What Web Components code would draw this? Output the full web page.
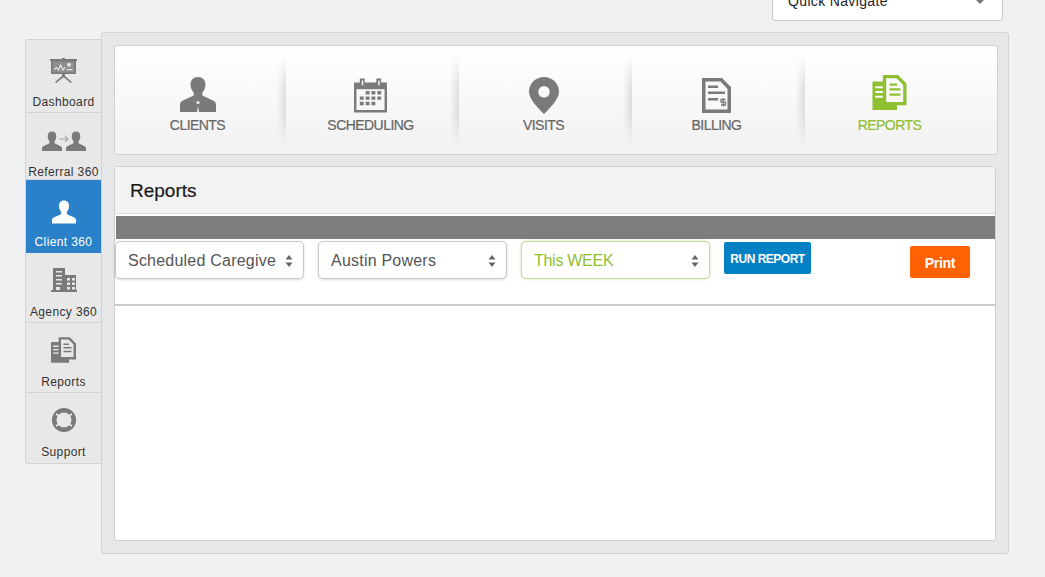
<!DOCTYPE html>
<html>
<head>
<meta charset="utf-8">
<title>Reports</title>
<style>
  html, body { margin: 0; height: 100%; background: #f0f1f3; overflow: hidden; }
  body { font-family: "Liberation Sans", Arial, sans-serif; }
</style>
</head>
<body>
<app-shell>
  <pick-box slot="top" wide>Quick Navigate</pick-box>

  <side-nav slot="side">
    <side-item label="Dashboard" h="73" top="15">
      <svg width="27" height="25" viewBox="0 0 27 25" fill="#7a7a7a">
        <path d="M12 0h3v1h12v2h-1v13H15v2l7 6-1.200 1L14 19.500h-1L6.200 25 5 24l7-6v-2H1V3H0V1h12z"/>
        <path fill="#8e8e8e" d="M2.500 3.500h22v11h-22z"/>
        <path fill="none" stroke="#e4e4e4" stroke-width="1.200" d="M4 11.500l2.500-2 2 2.500 2-5 2.500 5 2-3"/>
        <circle cx="19" cy="6.800" r="2" fill="#e4e4e4"/>
        <path fill="#e4e4e4" d="M16.500 11h6v1.200h-6z"/>
      </svg>
    </side-item>
    <side-item label="Referral 360" h="67" top="13" low>
      <svg width="44" height="24" viewBox="0 0 44 24" fill="#7a7a7a">
        <path fill="none" stroke="#a8a8a8" stroke-width="1.100" d="M17 10h9M23 7l3 3-3 3"/>
        <path d="M10 2.500c2.900 0 4.300 2 4.300 4.700 0 2.200-.8 4-1.800 5v2l5.800 2.700c1.100.5 1.700 1.200 1.700 2.300V22H0v-2.800c0-1.100.6-1.800 1.700-2.300l5.800-2.700v-2c-1-1-1.800-2.800-1.800-5C5.700 4.500 7.100 2.500 10 2.500z"/>
        <path d="M34 2.500c2.900 0 4.300 2 4.300 4.700 0 2.200-.8 4-1.800 5v2l5.800 2.700c1.100.5 1.700 1.200 1.700 2.300V22H24v-2.800c0-1.100.6-1.800 1.700-2.300l5.800-2.700v-2c-1-1-1.800-2.800-1.800-5C29.700 4.500 31.100 2.500 34 2.500z"/>
      </svg>
    </side-item>
    <side-item label="Client 360" h="73" top="17" active>
      <svg width="26" height="26" viewBox="0 0 26 26" fill="#fff">
        <path d="M13 1.500c3.300 0 5 2.300 5 5.400 0 2.500-.9 4.500-2.100 5.800v2.600l6.900 3c1.400.6 2.200 1.500 2.200 3v3.200H1v-3.200c0-1.500.8-2.400 2.200-3l6.900-3v-2.600C8.900 11.400 8 9.400 8 6.900c0-3.100 1.700-5.400 5-5.400z"/>
      </svg>
    </side-item>
    <side-item label="Agency 360" h="70" top="12">
      <svg width="26" height="26" viewBox="0 0 26 26" fill="#7a7a7a">
        <path fill-rule="evenodd" d="M2 1h12v7h11v15h1v2H0v-2h2zM5 4v1.500h6V4zm0 4v1.500h6V8zm0 4v1.500h6V12zm0 4v1.500h6V16zm0 4v3h4v-3zm11-9v2.500h3V11zm5 0v2.500h3V11zm-5 4.500V18h3v-2.500zm5 0V18h3v-2.500zM16 20v2.500h3V20zm5 0v2.500h3V20z"/>
      </svg>
    </side-item>
    <side-item label="Reports" h="70" top="12">
      <svg width="25" height="26" viewBox="0 0 36 37" fill="#7a7a7a">
        <path fill-rule="evenodd" d="M11 0h16l9 9v23H26v5H0V7h11zM14.500 3.500v25h18V10.500l-7-7zM3 12v2h8v-2zm0 5v2h8v-2zm0 5v2h8v-2z"/>
        <path d="M18 9h8v2.400h-8zM18 14h11.500v2.400H18zM18 19.500h11.500v2.400H18z"/>
      </svg>
    </side-item>
    <side-item label="Support" h="70" top="12" last>
      <svg width="26" height="26" viewBox="0 0 26 26">
        <circle cx="13" cy="13" r="9.800" fill="none" stroke="#7a7a7a" stroke-width="4.600"/>
        <path stroke="#e8e8e8" stroke-width="1.500" d="M5 7l5 3M21 7l-5 3M5 19l5-3M21 19l-5-3"/>
      </svg>
    </side-item>
  </side-nav>

  <top-tabs>
    <tab-item label="CLIENTS" first>
      <svg width="36" height="36" viewBox="0 0 36 36" fill="#7a7a7a">
        <path d="M18 0c4.500 0 7.500 3 7.500 7.500 0 3.500-1.400 6-3.200 8v3l10.700 5c2 .9 3 2.300 3 4.500v7H19l-1-6-1 6H0v-7c0-2.200 1-3.600 3-4.500l10.700-5v-3c-1.800-2-3.200-4.500-3.200-8C10.500 3 13.500 0 18 0z"/>
        <circle cx="18" cy="25.500" r="1.500" fill="#f6f6f6"/>
      </svg>
    </tab-item>
    <tab-item label="SCHEDULING">
      <svg width="33" height="36" viewBox="0 0 34 36" fill="#7a7a7a">
        <path fill-rule="evenodd" d="M0 5h6V1h5v4h12V1h5v4h6v31H0zM8 3v5h1.500V3zm17 0v5h1.500V3zM2.500 12v21.500h29V12z"/>
        <path d="M12 14h4v3.500h-4zM18 14h4v3.500h-4zM24 14h4v3.500h-4zM6 19.500h4V23H6zM12 19.500h4V23h-4zM18 19.500h4V23h-4zM24 19.500h4V23h-4zM6 25h4v3.500H6zM12 25h4v3.500h-4zM18 25h4v3.500h-4z"/>
      </svg>
    </tab-item>
    <tab-item label="VISITS">
      <svg width="30" height="37" viewBox="0 0 30 37" fill="#7a7a7a">
        <path fill-rule="evenodd" d="M15 0c8.300 0 15 6.500 15 14.700 0 7.500-9 16.300-15 22.300C9 31 0 22.200 0 14.700 0 6.500 6.700 0 15 0zm0 9a5.800 5.800 0 1 0 0 11.600A5.800 5.800 0 0 0 15 9z"/>
      </svg>
    </tab-item>
    <tab-item label="BILLING">
      <svg width="29" height="35" viewBox="0 0 29 35" fill="#7a7a7a">
        <path fill-rule="evenodd" d="M0 0h20l9 9v26H0zM3.500 3.500v28h22V11L18.500 3.500z"/>
        <path d="M6 7.500h10V10H6zM6 13.500h17V16H6zM6 20h10v2.500H6z"/>
        <path fill="none" stroke="#7a7a7a" stroke-width="1.300" d="M23.500 21.500H19v2.700h4.500V27H19M21.200 20v8.500"/>
      </svg>
    </tab-item>
    <tab-item label="REPORTS" active>
      <svg width="35" height="35" viewBox="0 0 36 37" fill="#8fc031" style="margin-bottom:5px">
        <path fill-rule="evenodd" d="M11 0h16l9 9v23H26v5H0V7h11zM14.500 3.500v25h18V10.500l-7-7zM3 12v2h8v-2zm0 5v2h8v-2zm0 5v2h8v-2z"/>
        <path d="M18 9h8v2.400h-8zM18 14h11.500v2.400H18zM18 19.500h11.500v2.400H18z"/>
      </svg>
    </tab-item>
  </top-tabs>

  <report-panel heading="Reports">
    <pick-box>Scheduled Caregive</pick-box>
    <pick-box>Austin Powers</pick-box>
    <pick-box green>This WEEK</pick-box>
    <action-button color="#0480c5" offset="1" w="87" h="32" fs="12" ls="-.5">RUN REPORT</action-button>
    <action-button slot="end" color="#ff6205" offset="5" w="60" h="32" fs="14" ls="-.3">Print</action-button>
  </report-panel>
</app-shell>

<script>
// small helper so each class only has to give its markup once
const shadow = (el, html) => {
  const root = el.attachShadow({ mode: 'open' });
  root.innerHTML = html;
  return root;
};

const FONT = '"Liberation Sans", Arial, sans-serif';

customElements.define('app-shell', class extends HTMLElement {
  constructor() {
    super();
    shadow(this, `
      <style>
        :host { display: block; width: 1045px; height: 577px; overflow: hidden; }
        .top { height: 21px; overflow: hidden; display: flex; justify-content: flex-end; align-items: flex-end; padding-right: 42px; }
        .body { display: flex; align-items: flex-start; padding: 11px 0 0 25px; }
        .side { padding-top: 7px; flex: none; width: 76px; }
        .main {
          flex: none; box-sizing: border-box; width: 908px; height: 522px;
          background: #e6e7e9; border: 1px solid #d2d3d5; border-radius: 3px;
          padding: 12px 10px 12px 12px;
          display: flex; flex-direction: column; gap: 11px;
        }
      </style>
      <div class="top"><slot name="top"></slot></div>
      <div class="body">
        <div class="side"><slot name="side"></slot></div>
        <div class="main"><slot></slot></div>
      </div>`);
  }
});

customElements.define('side-nav', class extends HTMLElement {
  constructor() {
    super();
    shadow(this, `
      <style>
        :host {
          display: block; box-sizing: border-box; width: 76px;
          background: #e8e8e8; border: 1px solid #d4d4d4; border-right: 0;
          border-radius: 3px 0 0 3px;
        }
      </style>
      <slot></slot>`);
  }
});

customElements.define('side-item', class extends HTMLElement {
  constructor() {
    super();
    const label = this.getAttribute('label');
    const h = this.getAttribute('h');
    const top = this.getAttribute('top') || 16;
    shadow(this, `
      <style>
        :host {
          display: flex; flex-direction: column; align-items: center; box-sizing: border-box;
          height: ${h}px; padding-top: ${top}px;
          border-bottom: 1px solid #d4d4d4; color: #333;
          font: 12px/14px ${FONT}; letter-spacing: .38px;
        }
        :host([active]) { background: #2a81c9; color: #fff; border-bottom-color: #2a81c9; }
        :host([last]) { border-bottom: 0; }
        .i { height: 30px; display: flex; align-items: center; justify-content: center; }
        .t { margin-top: auto; padding-bottom: 3px; white-space: nowrap; }
        :host([low]) .t { padding-bottom: 0; }
        :host([last]) .t { padding-bottom: 4px; }
      </style>
      <div class="i"><slot></slot></div>
      <div class="t">${label}</div>`);
  }
});

customElements.define('top-tabs', class extends HTMLElement {
  constructor() {
    super();
    shadow(this, `
      <style>
        :host {
          display: flex; box-sizing: border-box; width: 884px; height: 110px; flex: none;
          background: linear-gradient(#fff, #f1f1f1);
          border: 1px solid #d0d0d0; border-radius: 3px;
        }
      </style>
      <slot></slot>`);
  }
});

customElements.define('tab-item', class extends HTMLElement {
  constructor() {
    super();
    shadow(this, `
      <style>
        :host {
          position: relative; flex: none; box-sizing: border-box; width: 173px; padding: 30px 4px 0 0;
          display: flex; flex-direction: column; align-items: center;
          color: #666; font: 14px/16px ${FONT}; letter-spacing: -.55px;
          -webkit-text-stroke: .2px currentColor;
        }
        :host([first]) { margin-left: -2px; }
        :host([active]) { color: #8fc031; }
        :host(:not([first]))::before {
          content: ""; position: absolute; left: -9px; top: 8px; bottom: 8px; width: 9px;
          background: linear-gradient(to right, rgba(0,0,0,0), rgba(0,0,0,.11));
          -webkit-mask-image: linear-gradient(transparent, #000 35%, #000 65%, transparent);
        }
        .i { height: 38px; display: flex; align-items: center; justify-content: center; }
        .t { margin-top: 3px; white-space: nowrap; }
      </style>
      <div class="i"><slot></slot></div>
      <div class="t">${this.getAttribute('label')}</div>`);
  }
});

customElements.define('report-panel', class extends HTMLElement {
  constructor() {
    super();
    shadow(this, `
      <style>
        :host {
          display: block; box-sizing: border-box; width: 882px; height: 375px; flex: none;
          background: #fff; border: 1px solid #d0d0d0; border-radius: 3px;
        }
        h2 {
          margin: 0; height: 47px; box-sizing: border-box; padding: 13px 0 0 15px;
          background: #f2f2f2; border-bottom: 1px solid #dcdcdc;
          font: 400 19px/22px ${FONT}; color: #1a1a1a; -webkit-text-stroke: .2px currentColor;
        }
        .bar { height: 23px; margin: 2px 0 0 1px; background: #7d7d7d; }
        .filters {
          height: 67px; box-sizing: border-box; padding-top: 2px;
          border-bottom: 2px solid #ccc; display: flex; align-items: flex-start; gap: 14px;
        }
        .end { margin-left: auto; padding-right: 25px; display: flex; }
      </style>
      <h2>${this.getAttribute('heading')}</h2>
      <div class="bar"></div>
      <div class="filters"><slot></slot><div class="end"><slot name="end"></slot></div></div>`);
  }
});

customElements.define('pick-box', class extends HTMLElement {
  constructor() {
    super();
    shadow(this, `
      <style>
        :host {
          display: flex; align-items: center; box-sizing: border-box; width: 189px; height: 38px; flex: none;
          padding: 1px 10px 0 12px; background: #fff; color: #555;
          border: 1px solid #c8c8c8; border-radius: 5px; box-shadow: 0 1px 3px rgba(0,0,0,.14);
          font: 16px/20px ${FONT}; letter-spacing: .22px;
        }
        :host([green]) { color: #8fc031; border-color: #c6d8a4; box-shadow: 0 0 3px rgba(143,192,49,.45); letter-spacing: -.28px; }
        :host([wide]) { width: 231px; height: 40px; padding: 0 16px 0 15px; color: #222; font-size: 14px; letter-spacing: .35px; box-shadow: none; border-radius: 3px; }
        .t { flex: 1; overflow: hidden; white-space: nowrap; }
        svg { flex: none; }
        :host([wide]) svg { display: none; }
        .caret { display: none; width: 0; height: 0; border: 6px solid transparent; border-top: 6px solid #777; border-bottom: 0; }
        :host([wide]) .caret { display: block; }
      </style>
      <div class="t"><slot></slot></div>
      <svg width="8" height="12" viewBox="0 0 8 12" fill="#666"><path d="M4 0l3.500 4.500h-7zM4 12L.5 7.500h7z"/></svg>
      <div class="caret"></div>`);
  }
});

customElements.define('action-button', class extends HTMLElement {
  constructor() {
    super();
    const color = this.getAttribute('color');
    shadow(this, `
      <style>
        :host {
          display: flex; align-items: center; justify-content: center; box-sizing: border-box; flex: none;
          width: ${this.getAttribute('w')}px; height: ${this.getAttribute('h')}px;
          margin-top: ${this.getAttribute('offset')}px; padding-top: 1px;
          background: ${color}; border-radius: 2px; color: #fff;
          font: 700 ${this.getAttribute('fs')}px/16px ${FONT}; letter-spacing: ${this.getAttribute('ls')}px;
        }
      </style>
      <slot></slot>`);
  }
});
</script>
</body>
</html>
